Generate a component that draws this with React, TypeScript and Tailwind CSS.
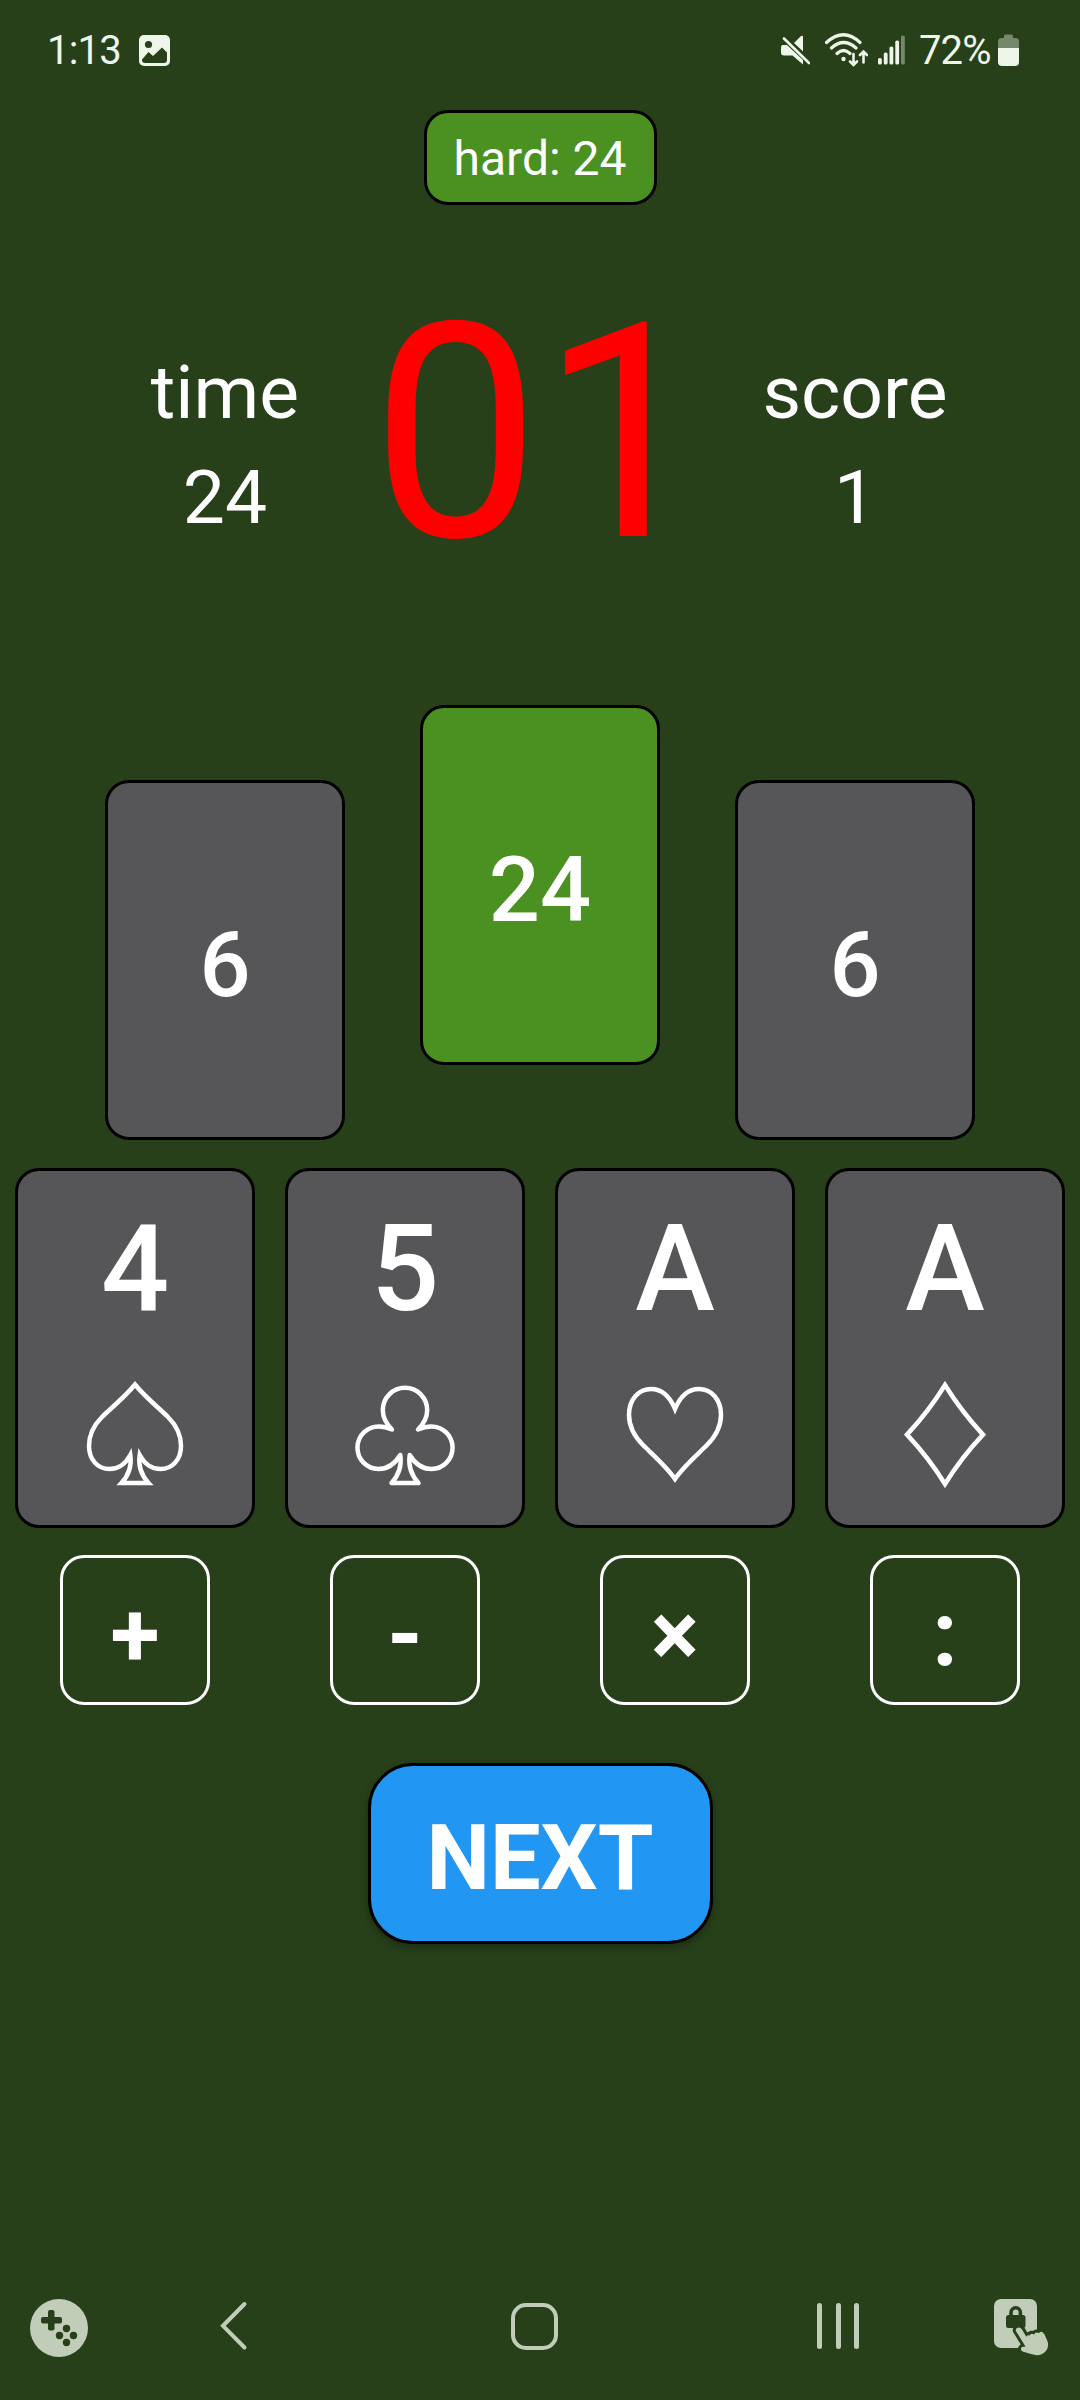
import React from "react";

type Suit = "spade" | "club" | "heart" | "diamond";

interface PlayingCard {
  id: number;
  label: string;
  suit: Suit;
}

const CARDS: PlayingCard[] = [
  { id: 1, label: "4", suit: "spade" },
  { id: 2, label: "5", suit: "club" },
  { id: 3, label: "A", suit: "heart" },
  { id: 4, label: "A", suit: "diamond" },
];

const OPERATORS = ["+", "-", "×", ":"];

const SUIT_PATHS: Record<Suit, string> = {
  spade:
    "M60 9.5C50 22 35 34 27 42C19 50 14 60 14 71C14 85 23 94 34.5 94C44 94 51 88 55.3 80C57 92 53 101 46.5 108H73.5C67 101 63 92 64.7 80C69 88 76 94 85.5 94C97 94 106 85 106 71C106 60 101 50 93 42C85 34 70 22 60 9.5Z",
  club: "M47 54.5C40.5 48 37.8 42 37.8 35A22.2 22.2 0 0 1 82.2 35C82.2 42 79.5 48 73 54.5C78 52.3 82 51.4 86 51.4A21.3 21.3 0 0 1 86.5 94C77 94 69.5 88 64.7 80C63 92 67 101 73.5 108H46.5C53 101 57 92 55.3 80C50.5 88 43 94 33.5 94A21.3 21.3 0 0 1 34 51.4C38 51.4 42 52.3 47 54.5Z",
  heart:
    "M60 104C52 92 38 80 28 70C20 62 14 53 14 40C14 24 24 14 36 14C47 14 55 22 60 34C65 22 73 14 84 14C96 14 106 24 106 40C106 53 100 62 92 70C82 80 68 92 60 104Z",
  diamond: "M60 10Q44 36 22 59.6Q44 83 60 109Q76 83 98 59.6Q76 36 60 10Z",
};

function SuitIcon({ suit }: { suit: Suit }) {
  return (
    <svg width="120" height="120" viewBox="0 0 120 120" fill="none" stroke="white" strokeWidth="4.5">
      <path d={SUIT_PATHS[suit]} strokeLinejoin={suit === "club" ? "round" : "miter"} />
    </svg>
  );
}

function StatusBar() {
  return (
    <div className="flex h-[100px] items-center justify-between pl-[47px] pr-[61px] text-[40px] leading-none text-[#eef5e9]">
      <div className="flex items-center">
        <span className="w-[92px] pt-[2px] tracking-[-0.8px]">1:13</span>
        <svg width="31" height="31" viewBox="0 0 31 31" fill="none">
          <rect width="31" height="31" rx="5" fill="currentColor" />
          <circle cx="9.5" cy="9.5" r="3.6" fill="#27401a" />
          <path d="M3 24.5L9.5 17L14 21L23 12.5L28 17.5V25Q28 28 25 28H6Q3 28 3 25Z" fill="#27401a" />
        </svg>
      </div>
      <div className="flex items-center">
        <svg width="29" height="32" viewBox="0 0 29 32" fill="currentColor">
          <path d="M1.5 11H6L22 26V30.5L11.5 21.500H3Q0 21.500 0 18.500V14Q0 11 1.5 11Z" />
          <path d="M13 9L20 2Q22 1 22 3V17.500Z" />
          <path d="M3 4.5L28 29" stroke="currentColor" strokeWidth="2.6" strokeLinecap="round" />
        </svg>
        <svg className="ml-[15px]" width="43" height="34" viewBox="0 0 43 34" fill="none" stroke="currentColor" strokeWidth="3.2" strokeLinecap="round">
          <path d="M1.5 9.5Q18.5 -6 35 9.5M6.5 15Q18.5 4 31 15M12 20.5Q18.5 14.5 25 20.5" />
          <circle cx="18.5" cy="26" r="2.2" fill="currentColor" stroke="none" />
          <path d="M28.5 21V31.5M25 28.5L28.5 32L32 28.5M38.5 29.5V19M35 22L38.5 18.5L42 22" strokeWidth="2.6" />
        </svg>
        <svg className="ml-[10px]" width="27" height="30" viewBox="0 0 27 30" fill="currentColor">
          <rect x="0" y="23" width="3.8" height="6.5" rx="1.6" />
          <rect x="5.8" y="17.5" width="3.8" height="12" rx="1.6" />
          <rect x="11.5" y="11.5" width="3.8" height="18" rx="1.6" />
          <rect x="17.3" y="5.5" width="3.8" height="24" rx="1.6" />
          <rect x="23" y="0.5" width="3.8" height="29" rx="1.6" opacity="0.4" />
        </svg>
        <span className="ml-[14px] w-[79px] pt-[2px] tracking-[-0.9px]">72%</span>
        <svg width="21" height="32" viewBox="0 0 21 32" fill="currentColor">
          <path d="M6 4V2Q6 0.5 7.5 0.5H13.5Q15 0.5 15 2V4H17.5Q21 4 21 7.5V14H0V7.5Q0 4 3.5 4Z" opacity="0.4" />
          <path d="M0 14H21V28Q21 32 17 32H4Q0 32 0 28Z" />
        </svg>
      </div>
    </div>
  );
}

function Stat({ label, value }: { label: string; value: number }) {
  return (
    <div className="flex w-[240px] flex-col items-center pt-8 text-[75px] leading-[105px]">
      <span>{label}</span>
      <span>{value}</span>
    </div>
  );
}

function ResultCard({ value, active = false }: { value: number; active?: boolean }) {
  return (
    <div
      className={`flex h-[360px] w-[240px] items-center justify-center rounded-3xl border-3 border-black pt-[11px] text-[90px] leading-none font-medium ${
        active ? "bg-[#4a9122]" : "mt-[75px] bg-[#565557]"
      }`}
    >
      {value}
    </div>
  );
}

function NavBar() {
  return (
    <div className="flex h-[72px] items-center pl-[30px] text-[#c1cdb9]">
      <svg width="58" height="58" viewBox="0 0 58 58">
        <circle cx="29" cy="29" r="29" fill="currentColor" />
        <g fill="#27401a">
          <rect x="11" y="18" width="21" height="6.5" rx="2" />
          <rect x="18" y="11" width="6.5" height="20.5" rx="2" />
          <circle cx="36.5" cy="29.5" r="3.7" />
          <circle cx="29.5" cy="36.5" r="3.7" />
          <circle cx="43.5" cy="36.5" r="3.7" />
          <circle cx="36.5" cy="43.5" r="3.7" />
        </g>
      </svg>
      <svg className="mb-1 ml-[131px]" width="29" height="50" viewBox="0 0 29 50" fill="none" stroke="currentColor" strokeWidth="4" strokeLinecap="round">
        <path d="M25.5 3L4 24.8L25.5 46.5" />
      </svg>
      <div className="mb-1 ml-[263px] size-[47px] rounded-[15px] border-4 border-current" />
      <div className="mb-1 ml-[259px] flex w-[42px] justify-between">
        <div className="h-[46px] w-[5px] rounded-full bg-current" />
        <div className="h-[46px] w-[5px] rounded-full bg-current" />
        <div className="h-[46px] w-[5px] rounded-full bg-current" />
      </div>
      <svg className="mb-[2px] ml-[135px]" width="56" height="58" viewBox="0 0 56 58" fill="currentColor">
        <rect x="0" y="1" width="43" height="49" rx="7" />
        <path d="M17 18V14.5A4.7 4.7 0 0 1 26.400 14.5V18" fill="none" stroke="#27401a" strokeWidth="3.6" />
        <rect x="12" y="17" width="19.5" height="13" rx="2.5" fill="#27401a" />
        <path
          d="M22.5 30.5Q25.5 28 28 31.5L32.5 39Q32.5 36.5 35.5 37.5Q37 34.500 40 36.5Q41.500 33.500 45 35Q48 32 50.500 36.500L53 42Q56 49 51 54Q46 59 37 56L28.500 53.5Q25.5 51 28 49L31.5 48.5L22.5 34Q21 32 22.5 30.5Z"
          stroke="#27401a"
          strokeWidth="6"
          paintOrder="stroke"
        />
      </svg>
    </div>
  );
}

export default function App() {
  return (
    <div className="flex h-[2400px] w-[1080px] flex-col overflow-hidden bg-[#27401a] font-['Roboto',sans-serif] text-white">
      <StatusBar />

      <div className="mt-[10px] flex justify-center">
        <button className="h-[95px] w-[233px] rounded-3xl border-3 border-black bg-[#4a9122] pt-[3px] text-[48px] leading-none">
          hard: 24
        </button>
      </div>

      <div className="mt-[103px] flex h-[250px] px-[105px]">
        <Stat label="time" value={24} />
        <div className="w-[390px] text-center text-[300px] leading-[252px] text-[#ff0000]">01</div>
        <Stat label="score" value={1} />
      </div>

      <div className="mt-[147px] flex justify-center gap-[75px]">
        <ResultCard value={6} />
        <ResultCard value={24} active />
        <ResultCard value={6} />
      </div>

      <div className="mt-7 grid grid-cols-4 justify-items-center">
        {CARDS.map((card) => (
          <button
            key={card.id}
            className="flex h-[360px] w-[240px] flex-col items-center rounded-3xl border-3 border-black bg-[#565557] pt-[38px] text-[120px] leading-[120px] font-medium"
          >
            <span className="h-[166px]">{card.label}</span>
            <SuitIcon suit={card.suit} />
          </button>
        ))}
      </div>

      <div className="mt-[27px] grid grid-cols-4 justify-items-center">
        {OPERATORS.map((op) => (
          <button
            key={op}
            className="size-[150px] rounded-3xl border-3 border-white pt-3 text-[90px] leading-none font-bold"
          >
            {op}
          </button>
        ))}
      </div>

      <div className="mt-[58px] flex justify-center">
        <button className="h-[181px] w-[345px] rounded-[45px] border-3 border-black bg-[#2196f3] pt-[10px] text-[90px] leading-none font-bold shadow-[0_4px_8px_rgba(0,0,0,0.3)]">
          NEXT
        </button>
      </div>

      <div className="mt-auto pb-[36px]">
        <NavBar />
      </div>
    </div>
  );
}
